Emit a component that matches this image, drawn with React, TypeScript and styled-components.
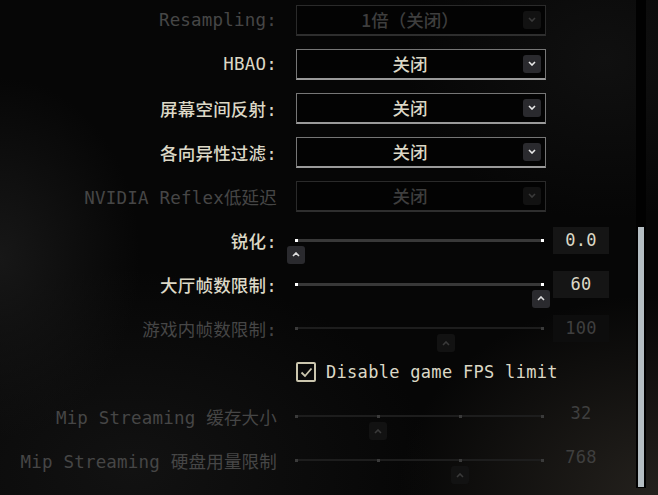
import React from "react";
import styled, { createGlobalStyle } from "styled-components";

const GlobalStyle = createGlobalStyle`
    html, body {
        margin: 0;
        padding: 0;
        background: #060606;
    }
    body {
        width: 658px;
        height: 495px;
        overflow: hidden;
    }
`;

const CREAM = "#dcd8c6";
const DIM = "#464646";

const Screen = styled.div`
    width: 658px;
    height: 495px;
    display: flex;
    overflow: hidden;
    font-family: "DejaVu Sans Mono", "Noto Sans CJK SC", monospace;
    background:
        radial-gradient(ellipse 260px 200px at 100% 100%, #24211d 0%, rgba(0, 0, 0, 0) 100%),
        radial-gradient(ellipse 140px 180px at 0% 52%, #171717 0%, rgba(0, 0, 0, 0) 100%),
        radial-gradient(ellipse 200px 160px at 92% 12%, #101010 0%, rgba(0, 0, 0, 0) 100%),
        radial-gradient(ellipse 300px 200px at 20% 95%, #121212 0%, rgba(0, 0, 0, 0) 100%),
        #060606;
`;

const Settings = styled.div`
    flex: 1;
    display: flex;
    flex-direction: column;
    margin-top: -2px;
`;

const Row = styled.div`
    display: grid;
    grid-template-columns: 277px auto;
    column-gap: 19px;
    align-items: center;
    height: 44px;
    flex-shrink: 0;
`;

const Label = styled.div<{ $off?: boolean }>`
    text-align: right;
    font-size: 17.5px;
    letter-spacing: 0.2px;
    white-space: nowrap;
    color: ${(p) => (p.$off ? DIM : CREAM)};
    font-weight: ${(p) => (p.$off ? 400 : 500)};
`;

const SelectBox = styled.div<{ $off?: boolean }>`
    box-sizing: border-box;
    width: 250px;
    height: 31px;
    display: flex;
    align-items: center;
    padding-right: 4px;
    border: 1px solid ${(p) => (p.$off ? "#2a2a2a" : "#767676")};
    border-bottom: 2px solid ${(p) => (p.$off ? "#2e2e2e" : "#9a9a9a")};
    background: #030303;
`;

const SelectValue = styled.span<{ $off?: boolean }>`
    flex: 1;
    text-align: center;
    font-family: "Noto Sans CJK SC", "DejaVu Sans", sans-serif;
    font-size: 17.5px;
    font-weight: 500;
    color: ${(p) => (p.$off ? "#3e3e3e" : CREAM)};
`;

const Caret = styled.span<{ $off?: boolean }>`
    width: 18px;
    height: 18px;
    border-radius: 3px;
    display: flex;
    align-items: center;
    justify-content: center;
    background: ${(p) => (p.$off ? "#121212" : "#2a2a2e")};
    color: ${(p) => (p.$off ? "#3a3a3a" : "#e8e8e8")};
`;

const SliderWrap = styled.div`
    display: flex;
    align-items: center;
    gap: 11px;
`;

const Track = styled.div<{ $off?: boolean }>`
    position: relative;
    width: 246px;
    height: ${(p) => (p.$off ? 2 : 3)}px;
    background: ${(p) => (p.$off ? "#1d1d1d" : "#383838")};
`;

const Stop = styled.span<{ $off?: boolean }>`
    position: absolute;
    top: 50%;
    width: 3px;
    height: 3px;
    margin: -1.5px 0 0 -1.5px;
    background: ${(p) => (p.$off ? "#3a3a3a" : "#ffffff")};
`;

const Thumb = styled.span<{ $off?: boolean }>`
    position: absolute;
    top: 7px;
    width: 18px;
    height: 18px;
    margin-left: -9px;
    border-radius: 3px;
    display: flex;
    align-items: center;
    justify-content: center;
    background: ${(p) => (p.$off ? "#121212" : "#2a2a2e")};
    color: ${(p) => (p.$off ? "#3a3a3a" : "#dedede")};
`;

const ValueBox = styled.div<{ $off?: boolean; $boxed?: boolean }>`
    width: 56px;
    height: 27px;
    display: flex;
    align-items: center;
    justify-content: center;
    font-size: 17px;
    letter-spacing: 0.3px;
    background: ${(p) => (!p.$boxed ? "transparent" : p.$off ? "#0d0d0d" : "#151515")};
    color: ${(p) => (p.$off ? "#3f3f3f" : CREAM)};
    margin-top: ${(p) => (p.$boxed ? 0 : -6)}px;
`;

const CheckRow = styled.label`
    grid-column: 2;
    display: flex;
    align-items: center;
    gap: 10px;
    font-size: 17px;
    letter-spacing: 0.3px;
    color: ${CREAM};
`;

const CheckSquare = styled.span`
    box-sizing: border-box;
    width: 20px;
    height: 20px;
    border: 2px solid #cbc6ae;
    border-radius: 2px;
    display: flex;
    align-items: center;
    justify-content: center;
    color: #cbc6ae;
`;

const ScrollTrack = styled.div`
    width: 10px;
    margin-right: 12px;
    height: 488px;
    box-sizing: border-box;
    padding: 227px 2px 1px;
    background: #010101;
`;

const ScrollThumb = styled.div`
    height: 100%;
    background: #b5bec3;
`;

const ChevronDown = () => (
    <svg width="8" height="5" viewBox="0 0 8 5">
        <polyline points="1,1 4,4 7,1" fill="none" stroke="currentColor" strokeWidth="1.6" />
    </svg>
);

const ChevronUp = () => (
    <svg width="8" height="5" viewBox="0 0 8 5">
        <polyline points="1,4 4,1 7,4" fill="none" stroke="currentColor" strokeWidth="1.6" />
    </svg>
);

type SelectProps = { label: string; value: string; off?: boolean };

const SelectRow = ({ label, value, off }: SelectProps) => (
    <Row>
        <Label $off={off}>{label}</Label>
        <SelectBox $off={off}>
            <SelectValue $off={off}>{value}</SelectValue>
            <Caret $off={off}>
                <ChevronDown />
            </Caret>
        </SelectBox>
    </Row>
);

type SliderProps = {
    label: string;
    value: string;
    pos: number;
    off?: boolean;
    stops?: number[];
    boxed?: boolean;
};

const SliderRow = ({ label, value, pos, off, stops = [0, 1], boxed = true }: SliderProps) => (
    <Row>
        <Label $off={off}>{label}</Label>
        <SliderWrap>
            <Track $off={off}>
                {stops.map((s) => (
                    <Stop key={s} $off={off} style={{ left: `${s * 100}%` }} />
                ))}
                <Thumb $off={off} style={{ left: `${pos * 100}%` }}>
                    <ChevronUp />
                </Thumb>
            </Track>
            <ValueBox $off={off} $boxed={boxed}>
                {value}
            </ValueBox>
        </SliderWrap>
    </Row>
);

export default function App() {
    return (
        <>
            <GlobalStyle />
            <Screen>
                <Settings>
                    <SelectRow label="Resampling:" value="1倍（关闭）" off />
                    <SelectRow label="HBAO:" value="关闭" />
                    <SelectRow label="屏幕空间反射:" value="关闭" />
                    <SelectRow label="各向异性过滤:" value="关闭" />
                    <SelectRow label="NVIDIA Reflex低延迟" value="关闭" off />
                    <SliderRow label="锐化:" value="0.0" pos={0} />
                    <SliderRow label="大厅帧数限制:" value="60" pos={0.995} />
                    <SliderRow label="游戏内帧数限制:" value="100" pos={0.608} off />
                    <Row>
                        <CheckRow>
                            <CheckSquare>
                                <svg width="13" height="11" viewBox="0 0 13 11">
                                    <polyline
                                        points="1.5,5.5 5,9 11.5,1.5"
                                        fill="none"
                                        stroke="currentColor"
                                        strokeWidth="1.8"
                                    />
                                </svg>
                            </CheckSquare>
                            Disable game FPS limit
                        </CheckRow>
                    </Row>
                    <SliderRow
                        label="Mip Streaming 缓存大小"
                        value="32"
                        pos={1 / 3}
                        off
                        stops={[0, 1 / 3, 2 / 3, 1]}
                        boxed={false}
                    />
                    <SliderRow
                        label="Mip Streaming 硬盘用量限制"
                        value="768"
                        pos={2 / 3}
                        off
                        stops={[0, 1 / 3, 2 / 3, 1]}
                        boxed={false}
                    />
                </Settings>
                <ScrollTrack>
                    <ScrollThumb />
                </ScrollTrack>
            </Screen>
        </>
    );
}
